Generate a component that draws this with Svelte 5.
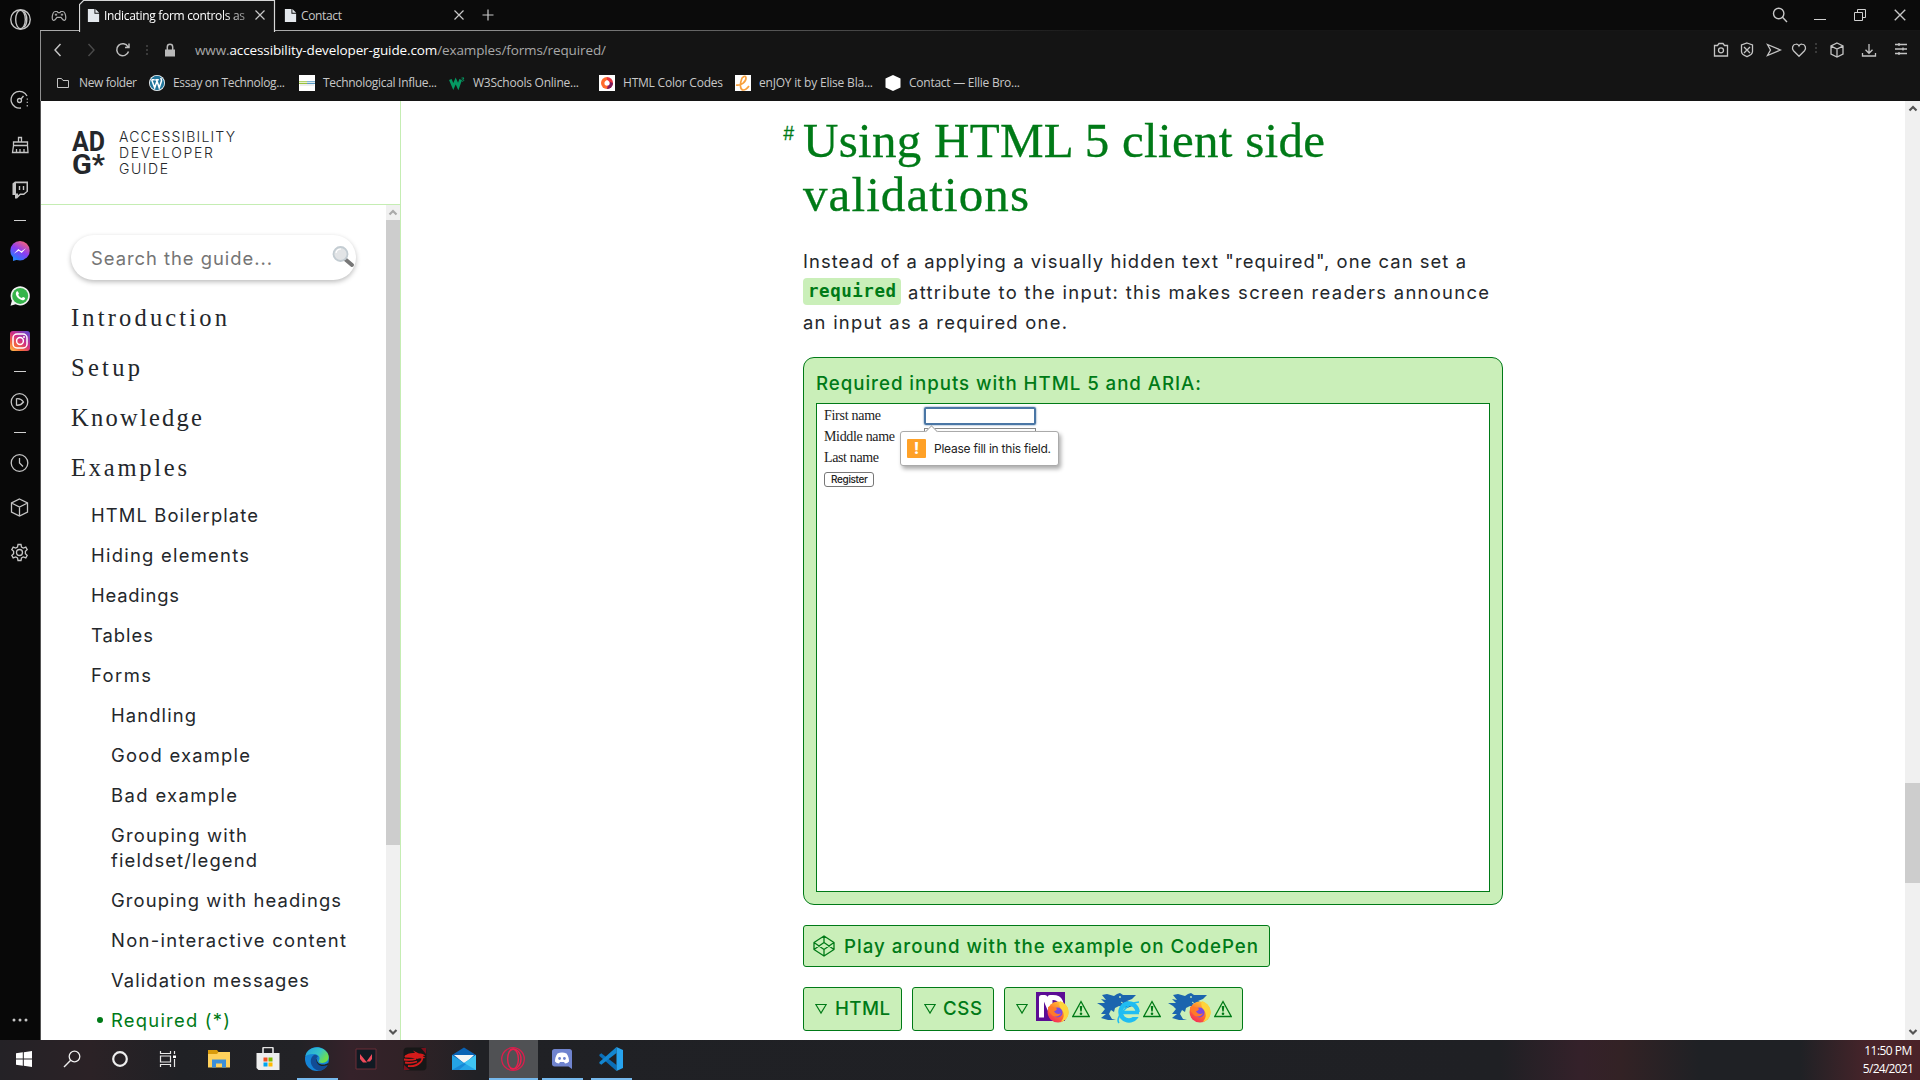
<script>
  // Spreads a line of text to a given width with letter-spacing.
  function fit(node, width) {
    const count = Math.max(node.textContent.trim().length - 1, 1);
    let spacing = 0.01;
    for (let i = 0; i < 3; i++) {
      node.style.letterSpacing = spacing + 'px';
      const used = node.getBoundingClientRect().width - spacing;
      spacing += (width - used) / count;
    }
    node.style.letterSpacing = spacing + 'px';
  }

  const line = 'fill="none" stroke="#c4c4c4" stroke-width="1.3"';
  const firefox = `<circle cx="11" cy="12" r="10.5" fill="url(#ff)"/><path d="M13 1c5 2 9 6 8.600 12-.5 5-4 8-8 9 4-4 4-9 1-12-2-3-3-5-1.600-9z" fill="#ffd43a"/><circle cx="10.500" cy="12.500" r="5" fill="#7a4be0"/><path d="M1 7c3-2 5 0 8 1 2 1 0 3-2 3 1 3 5 4 7 2-1 4-7 5-10 1-2-2-3-4-3-7z" fill="#ff7a2a"/>`;
  const shark = `<path d="M5 3 10 2 17 4 20 2 23 1 26 3 39 3 35 7 30 9 38 13 30 16 22 14 18 16 17 20 14 18 12 22 15 27 19 28 11 28 4 26 9 22 4 22 8 17 5 14 0 11 8 11 4 7 9 8z" fill="#1b65ae"/><path d="M24 10l3 2 3-2 2 3" fill="none" stroke="#caefb9" stroke-width="1"/><circle cx="23" cy="5" r=".9" fill="#caefb9"/>`;

  const icons = {
    opera: [20, `<circle cx="10" cy="10" r="9.300" ${line}/><ellipse cx="10" cy="10" rx="4.600" ry="8.800" ${line}/><path d="M13 2.500c4 3 4 12 0 15" ${line}/>`],
    pad: [16, `<path d="M4 3.500h2.200l.8 1.200h2l.8-1.200H12c1.700 0 2.800 3.500 2.800 6.500s-2.300 3-3.800.7L10 9.300H6L5 10.700c-1.500 2.300-3.800 2.300-3.800-.7S2.300 3.500 4 3.500z" fill="none" stroke="#aaa" stroke-width="1.200"/><path d="M3.800 6.700h2.400M5 5.500v2.400M9.800 6.700h2.400M11 5.500v2.400" stroke="#aaa"/>`],
    doc: [16, `<path d="M2 1h7v5h5v9H2z" fill="#e4e8ec"/><path d="M10 1l4 4h-4z" fill="#e4e8ec"/>`],
    x: [12, `<path d="M1.500 1.500l9 9m0-9l-9 9" stroke="#c8c8c8" stroke-width="1.200"/>`],
    plus: [12, `<path d="M6 .5v11M.5 6h11" stroke="#c8c8c8" stroke-width="1.200"/>`],
    back: [14, `<path d="M9.500 1L4 7l5.500 6" fill="none" stroke="#c8c8c8" stroke-width="1.400"/>`],
    forward: [14, `<path d="M4.500 1L10 7l-5.500 6" fill="none" stroke="#4b4b4b" stroke-width="1.400"/>`],
    reload: [16, `<path d="M13.500 9.500A6 6 0 1 1 13 4.800M14 1.500V5.500H10" fill="none" stroke="#bdbdbd" stroke-width="1.500"/>`],
    dots: [12, `<path d="M5 1h2v2H5zM5 5h2v2H5zM5 9h2v2H5z" fill="#3a3a3a"/>`],
    lock: [14, `<path d="M2 6.500h10v7H2z" fill="#b9b9b9"/><path d="M4.300 7V4a2.700 2.700 0 0 1 5.400 0v3" fill="none" stroke="#b9b9b9" stroke-width="1.500"/>`],
    folder: [14, `<path d="M1.500 2.500h4l1.500 2h5.500v7h-11z" fill="none" stroke="#c4c4c4"/>`],
    wordpress: [16, `<circle cx="8" cy="8" r="8" fill="#f4f8fa"/><circle cx="8" cy="8" r="7.200" fill="#21759b"/><path d="M2.500 4.800h3.200M2.700 5l3 7.800L8 6l2.200 6.800 2.200-6.500c.5-1.500-.5-2-.5-3.200M6.300 4.800h3.500M6.800 5L8 6" fill="none" stroke="#fff" stroke-width="1.500"/>`],
    tech: [16, `<path d="M0 0h16v16H0z" fill="#fff"/><path d="M0 6.200h8v1H0zM0 8h8v1H0z" fill="#99c23c"/><path d="M8 6.200h8v1H8zM8 8h8v1H8z" fill="#5a9bc4"/><path d="M1 10h14" stroke="#ccc" stroke-width=".7"/>`],
    w3: [16, `<path d="M1.300 4.500L4.300 11.500 6.700 6 9.200 11.500 11.700 4.500" fill="none" stroke="#059862" stroke-width="2.800"/><path d="M12.500 3h2.500l-1.300 1.500c1.500 0 1.500 2-.9 1.700" fill="none" stroke="#059862"/>`],
    colors: [16, `<path d="M0 0h16v16H0z" fill="#fff"/><path d="M8 2a6 6 0 1 0 0 12z" fill="#ff6a2b"/><path d="M8 2a6 6 0 1 1 0 12z" fill="#e8343f"/><path d="M8 14a6 6 0 0 0 6-6l-3-1z" fill="#7a1d5c"/><path d="M8 5c2 1 3 2 2.600 4S6 11.500 5.500 9 6.500 6 8 5z" fill="#fff"/>`],
    enjoy: [16, `<path d="M0 0h16v16H0z" fill="#fff"/><path d="M1 10c5 1 10-3 10-7 0-3-4-2-5 3-1 4-1 9 2.500 9 2.500 0 4-2 5.500-4" fill="none" stroke="#f8a13e" stroke-width="1.700"/>`],
    hex: [16, `<path d="M8 0l7.500 3.500v9L8 16 .5 12.500v-9z" fill="#fff"/>`],
    search: [16, `<circle cx="6.700" cy="6.500" r="5.200" fill="none" stroke="#c8c8c8" stroke-width="1.400"/><path d="M10.500 10.300L15 15" stroke="#c8c8c8" stroke-width="1.400"/>`],
    min: [12, `<path d="M0 10.500h12" stroke="#d0d0d0"/>`],
    restore: [12, `<path d="M.5 3.500h8v8h-8zM3.500 3V.5h8v8H9" fill="none" stroke="#d0d0d0"/>`],
    camera: [16, `<path d="M1.500 3.500h3l1.500-2h4l1.500 2h3v10.500h-13z" ${line}/><circle cx="8" cy="8.300" r="2.500" ${line}/>`],
    shield: [16, `<path d="M8 1l5.500 2v6.500c0 2.500-2.500 4-5.500 5.200-3-1.200-5.500-2.700-5.500-5.200V3z" ${line}/><path d="M5 5l6 6m0-6l-6 6" ${line}/>`],
    send: [16, `<path d="M1.500 2.500L14.500 8l-13 5.500L4.500 8z" ${line}/>`],
    heart: [16, `<path d="M8 14.300L2.500 8.800C.5 6.500 1.500 2.500 4.800 2.200 6.500 2 7.500 3 8 4c.5-1 1.500-2 3.200-1.800 3.300.3 4.300 4.300 2.300 6.600z" ${line}/>`],
    cube: [16, `<path d="M8 1l6 3v8l-6 3-6-3V4zM2.200 4.200L8 7l5.800-2.800M8 7v8" ${line}/>`],
    download: [16, `<path d="M8 2v9M4.500 7.800L8 11.300l3.500-3.500M1.500 11v3h13v-3" ${line}/>`],
    sliders: [14, `<path d="M1 2.500h12M1 7h12M1 11.500h12M5 1v3M9 5.500v3M5 10v3" ${line}/>`],
    speed: [20, `<path d="M11 18A8.400 8.400 0 1 1 17 6" ${line}/><path d="M17.300 8.500v8" stroke="#aaa" stroke-width="1.300" stroke-dasharray="1.300 2"/><circle cx="9.500" cy="10.500" r="2" ${line}/><path d="M11 9l2.500-3" ${line}/>`],
    brush: [20, `<path d="M8.500 7V2.500h3V7M3.500 7h14v3.500h-14zM3.500 10.500l-1 7h15.500l-.5-7M6.500 17.500V14M10 17.500V14M14 17.500V14" ${line}/>`],
    twitch: [20, `<path d="M2.500 3.500L5 1.500h13v10L14 15h-3.500L7 18.500H5V15H2.500z" fill="#c4c4c4"/><path d="M6 3.200h10.500v8l-3 2.300H10l-2 1.800v-1.800H6z" fill="#0a0a0a"/><path d="M9.500 6v4M13.500 6v4" stroke="#c4c4c4" stroke-width="1.400"/>`],
    messenger: [20, `<circle cx="10" cy="9.700" r="9.700" fill="url(#ms)"/><path d="M3 15v5l5-1.500z" fill="#2d83fb"/><path d="M3.800 12.800l4.500-4.900 3 2.400L16 7.200l-4.300 4.900-3-2.300z" fill="#fff"/>`],
    whatsapp: [20, `<path d="M.5 19.700l1.400-5A9.600 9.600 0 1 1 5.600 18.300z" fill="#f2f2f2"/><circle cx="10.200" cy="9.900" r="8" fill="#35b44a"/><path d="M7 5.300c1-.8 1.600 1.500 1.900 2 .2.600-.8 1.200-.6 1.600.8 1.500 1.800 2.500 3.400 3.100.4.100.9-1.200 1.500-1 .6.200 2 .9 2 1.300-.1 1.500-1.700 2.300-3 2-3.300-.7-5.800-3.400-6.300-5.700-.2-1.500.3-2.600 1.100-3.300z" fill="#fff"/>`],
    instagram: [20, `<rect width="20" height="20" rx="3" fill="url(#ig)"/><rect x="3" y="3" width="14" height="14" rx="4" fill="none" stroke="#fff" stroke-width="1.500"/><circle cx="10" cy="10" r="3.400" fill="none" stroke="#fff" stroke-width="1.500"/><circle cx="14" cy="6" r="1" fill="#fff"/>`],
    player: [20, `<circle cx="9.500" cy="10" r="8.300" ${line}/><path d="M6.500 6.800c3-.5 5.500 1 7 3.200-1.500 2-4 3.500-7 3.200z" ${line}/>`],
    clock: [20, `<circle cx="9.500" cy="10" r="8.300" ${line}/><path d="M9.500 5v5l3.500 3.500" ${line}/>`],
    box: [20, `<path d="M9.500 1l8 4v9l-8 4-8-4V5zM1.500 5l8 4 8-4M9.500 9v9" ${line}/>`],
    gear: [20, `<circle cx="9.500" cy="9.500" r="3" ${line}/><path d="M8 1.500h3l.5 2.500 1.800 1 2.500-.9 1.400 2.600-1.800 1.700v2.200l1.800 1.700-1.400 2.600-2.500-.9-1.800 1-.5 2.500H8L7.500 15l-1.800-1-2.500.9-1.400-2.600 1.800-1.700V8.400L1.800 6.700l1.400-2.600 2.500.9 1.800-1z" ${line}/>`],
    more: [20, `<circle cx="4" cy="10" r="1.500" fill="#c4c4c4"/><circle cx="10" cy="10" r="1.500" fill="#c4c4c4"/><circle cx="16" cy="10" r="1.500" fill="#c4c4c4"/>`],
    windows: [24, `<path d="M4 6.300l6.800-1v6.200H4zM11.800 5.200L20 4v7.500h-8.200zM4 12.500h6.800v6.200L4 17.700zM11.800 12.500H20V20l-8.200-1.200z" fill="#fff"/>`],
    find: [24, `<circle cx="14.500" cy="9.500" r="5.300" fill="none" stroke="#eee" stroke-width="1.300"/><path d="M10.700 13.300L4 20" stroke="#eee" stroke-width="1.400"/>`],
    cortana: [24, `<circle cx="12" cy="12" r="6.800" fill="none" stroke="#eee" stroke-width="2.200"/>`],
    tasks: [24, `<path d="M4.500 4v2.500h10V4M4.500 20v-2.500h10V20M4.500 9h10v6h-10zM18.500 4v3M18.500 12v8" fill="none" stroke="#e8e8e8" stroke-width="1.200"/><path d="M17 8.500h3v2.500h-3z" fill="#fff"/>`],
    explorer: [24, `<path d="M1 3h9l1.500 2H23v15H1z" fill="#d99b0c"/><path d="M1 7h9l1.500-2H23v15.500H1z" fill="#ffd15c"/><path d="M5 20.500v-8h14v8h-4v-4H9v4z" fill="#3c8fd8"/>`],
    store: [24, `<path d="M7 7V1.500c0-.6.400-1 1-1h8c.6 0 1 .4 1 1V7" fill="none" stroke="#e2e2e2" stroke-width="1.600"/><path d="M.5 6h23v17h-21l-2-2z" fill="#eee"/><path d="M7.500 10.500h4v4h-4z" fill="#f25022"/><path d="M12.500 10.500h4v4h-4z" fill="#7fba00"/><path d="M7.500 15.500h4v4h-4z" fill="#00a4ef"/><path d="M12.500 15.500h4v4h-4z" fill="#ffb900"/>`],
    edge: [24, `<circle cx="12" cy="12" r="12" fill="#1583d5"/><path d="M.4 9C2-1 18-3 23 7c2 5-1 9-6 9-3 0-4-1-3-2.500C16 9 12 7 8 7 4 7 1.500 8.500.4 9z" fill="url(#ed)"/><path d="M9 8c-6 4-3 14 5 15.800 4-.3 7-2.300 9-5.800-4 2-10 1.500-11.500-3C10.500 12 12 10 13 9.500 12 8 10.500 7.500 9 8z" fill="#124c95"/><path d="M13 10c-2 2-1 6 2 7 3 1 6 .5 8-1v2c-4 2-10 1.500-11.500-3-.6-2 .2-4 1.500-5z" fill="#1f2024"/>`],
    valorant: [24, `<path d="M2 2h20v20H2z" fill="#101a23" stroke="#6b2c37"/><path d="M6 7l7 8.500H9L6 12zM18 7v5l-2 2.500h-3.500z" fill="#ef4a5a"/>`],
    dragon: [24, `<rect x=".5" y=".5" width="23" height="23" rx="4" fill="#171717"/><path d="M18 1h5v6zM1 18v5h6z" fill="#7b101c"/><path d="M1 9.500c3-3 7-4 11-3.500L10 3.500l6 3c3-.5 5 1 6.500 2l-3 .5 3 2-4 .5" fill="#d51b1b"/><path d="M2 9.500c5 0 9 .5 12 1.500l5-1.500c1 3-1 6-4 7.500M1 12.500c4 .5 8 .5 12-.5M2 15.500c4 .8 8 .5 12-1M5 19c5 .5 9-.5 12-3.500" fill="none" stroke="#d51b1b" stroke-width="1.800"/>`],
    mail: [24, `<path d="M0 8l12-7.500L24 8v3L12 16 0 11z" fill="#0a62b4"/><path d="M2 8h20l-9 9z" fill="#f4f4f4"/><path d="M0 8l12 8L24 8v15H0z" fill="#25a4e6"/><path d="M12 16L24 8v15z" fill="#3fc4f2"/><path d="M0 23l12-7 2 1-7 6z" fill="#1889d6"/>`],
    operagx: [24, `<circle cx="12" cy="12" r="11.300" fill="none" stroke="#d91e4c" stroke-width="1.300"/><ellipse cx="12" cy="12" rx="5.400" ry="10" fill="none" stroke="#e8204f" stroke-width="1.400"/><path d="M9 3c7-3 11 3 11 9s-4 12-11 9" fill="none" stroke="#e8204f" stroke-width="1.400"/>`],
    discord: [24, `<path d="M4.500 2h15c1.500 0 2.500 1 2.500 2.500V22l-3.500-2.500H4.500C3 19.500 2 18.500 2 17V4.500C2 3 3 2 4.500 2z" fill="#7084cf"/><path d="M7.500 6.500c3-1.300 6-1.300 9 0C18.500 9 19 12 19 14.500c-1 1.200-2.500 2-4 2l-1-1.500h-4L9 16.500c-1.500 0-3-.8-4-2 0-2.500.5-5.500 2.500-8z" fill="#fff"/><circle cx="9.600" cy="11.500" r="1.400" fill="#7084cf"/><circle cx="14.400" cy="11.500" r="1.400" fill="#7084cf"/>`],
    vscode: [24, `<path d="M.3 7.800l2-1.600L17.500 18v6L.5 9z" fill="#0b6fb8"/><path d="M.3 16.200l2 1.600L17.500 6V0L.5 15z" fill="#1386d0"/><path d="M17.500 0L24 3v18l-6.500 3z" fill="#27a3ee"/>`],
    codepen: [22, `<path d="M11 1l10 6.500v7L11 21 1 14.500v-7zM11 1v6.500M11 14.500V21M1 7.500l10 7 10-7M1 14.500l10-7 10 7" fill="none" stroke="#007a17" stroke-width="1.300" stroke-linejoin="round"/>`],
    down: [12, `<path d="M.8 1.500h10.400L6 10z" fill="none" stroke="#007a17" stroke-width="1.200"/>`],
    warn: [18, `<path d="M9 1.500L17.200 16.500H.8z" fill="none" stroke="#007a17" stroke-width="1.300"/><path d="M7.700 6h2.600l-.6 5.500H8.300z" fill="#007a17"/><circle cx="9" cy="13.700" r="1.300" fill="#007a17"/>`],
    up: [10, `<path d="M1.500 6.500L5 3l3.500 3.500" fill="none" stroke="#555" stroke-width="2.200"/>`],
    upLight: [10, `<path d="M1.500 6.500L5 3l3.500 3.500" fill="none" stroke="#aaa" stroke-width="2.200"/>`],
    downArrow: [10, `<path d="M1.500 3L5 6.500 8.500 3" fill="none" stroke="#555" stroke-width="2.200"/>`],
    glass: [24, `<path d="M14.500 14.500l6.500 5.500" stroke="#777" stroke-width="4" stroke-linecap="round"/><circle cx="9.500" cy="9" r="7" fill="#e2e4e6" stroke="#c3ccd2" stroke-width="1.800"/><path d="M5 8a5 5 0 0 1 5-4" stroke="#fff" stroke-width="1.200" fill="none"/>`]
  };

  const bookmarks = [
    ['folder', 'New folder', 58, 93],
    ['wordpress', 'Essay on Technolog...', 112, 150],
    ['tech', 'Technological Influe...', 114, 150],
    ['w3', 'W3Schools Online...', 106, 150],
    ['colors', 'HTML Color Codes', 100, 136],
    ['enjoy', 'enJOY it by Elise Bla...', 114, 150],
    ['hex', 'Contact — Ellie Bro...', 111, 150]
  ];
  const tools = [['camera', 18], ['shield', 34], ['send', 20], ['heart', 30], ['dots', 4], ['cube', 37], ['download', 27], ['sliders', 38]];
  const rail = ['speed', 'brush', 'twitch', '-', 'messenger', 'whatsapp', 'instagram', '-', 'player', '-', 'clock', 'box', 'gear'];
  const chapters = [['Introduction', 156], ['Setup', 69], ['Knowledge', 131], ['Examples', 116]];
  const topics = [['HTML Boilerplate', 167], ['Hiding elements', 158], ['Headings', 88], ['Tables', 62], ['Forms', 60]];
  const pages = [
    [['Handling', 85]],
    [['Good example', 139]],
    [['Bad example', 126]],
    [['Grouping with', 136], ['fieldset/legend', 146]],
    [['Grouping with headings', 230]],
    [['Non-interactive content', 235]],
    [['Validation messages', 198]]
  ];
  const taskbar = [
    ['windows'], ['find'], ['cortana'], ['tasks'], ['explorer'], ['store'],
    ['edge', 'run'], ['valorant'], ['dragon'], ['mail'], ['operagx', 'active'], ['discord', 'run'], ['vscode', 'run']
  ];
</script>

{#snippet icon(name, size)}
  <svg class="icon" width={size ?? icons[name][0]} height={size ?? icons[name][0]} viewBox="0 0 {icons[name][0]} {icons[name][0]}">{@html icons[name][1]}</svg>
{/snippet}

<svg class="defs" width="0" height="0">
  <defs>
    <linearGradient id="ms" x1=".2" y1="1" x2=".8" y2="0"><stop offset="0" stop-color="#1687ff" /><stop offset=".5" stop-color="#8a3cf5" /><stop offset="1" stop-color="#ff6670" /></linearGradient>
    <linearGradient id="ig" x1="0" y1="1" x2=".8" y2="0"><stop offset="0" stop-color="#ffc94f" /><stop offset=".3" stop-color="#f4683c" /><stop offset=".6" stop-color="#cf2d86" /><stop offset="1" stop-color="#6a45c8" /></linearGradient>
    <linearGradient id="ed" x1="0" y1="0" x2="1" y2=".5"><stop offset="0" stop-color="#1f9fe0" /><stop offset=".6" stop-color="#35c3c8" /><stop offset="1" stop-color="#6fe04a" /></linearGradient>
    <linearGradient id="ff" x1=".8" y1="0" x2=".2" y2="1"><stop offset="0" stop-color="#ffd53a" /><stop offset=".5" stop-color="#ff7a2c" /><stop offset="1" stop-color="#f5245e" /></linearGradient>
  </defs>
</svg>

<div class="screen">
  <div class="window">
    <aside class="rail">
      <div class="brand">{@render icon('opera', 21)}</div>
      {#each rail as item}
        {#if item === '-'}
          <div class="split"><i></i></div>
        {:else}
          <div class="slot">{@render icon(item)}</div>
        {/if}
      {/each}
      <div class="more">{@render icon('more')}</div>
    </aside>

    <div class="browser">
      <div class="tabs">
        <div class="pad">{@render icon('pad')}</div>
        <div class="tab active">
          <svg class="outline" width="197" height="32" viewBox="0 0 197 32"><path d="M.5 32V4.500L4.500.5H195.500V32" fill="#141414" stroke="#d6d6d6" stroke-width="1.200" /></svg>
          {@render icon('doc', 15)}
          <span class="name"><span class="line" use:fit={141}>Indicating form controls as</span></span>
          {@render icon('x')}
        </div>
        <div class="tab">
          {@render icon('doc', 15)}
          <span class="name"><span class="line" use:fit={41}>Contact</span></span>
          {@render icon('x')}
        </div>
        <div class="new">{@render icon('plus')}</div>
        <div class="controls">
          <div>{@render icon('search')}</div>
          <div>{@render icon('min')}</div>
          <div>{@render icon('restore')}</div>
          <div>{@render icon('x', 14)}</div>
        </div>
      </div>

      <div class="address">
        <div class="go">{@render icon('back')}</div>
        <div class="go">{@render icon('forward')}</div>
        <div class="go">{@render icon('reload')}</div>
        <div class="go short">{@render icon('dots')}</div>
        <div class="go">{@render icon('lock')}</div>
        <div class="url"><span class="line" use:fit={411}>www.<b>accessibility-developer-guide.com</b>/examples/forms/required/</span></div>
        <div class="tools">
          {#each tools as [name, width]}
            <div class="tool" style="width: {width}px">{@render icon(name)}</div>
          {/each}
        </div>
      </div>

      <div class="bookmarks">
        {#each bookmarks as [name, label, width, span]}
          <div class="bookmark" style="width: {span}px">
            {@render icon(name)}
            <span class="line" use:fit={width}>{label}</span>
          </div>
        {/each}
      </div>

      <div class="page">
        <nav class="sidebar">
          <header>
            <svg class="logo" width="34" height="54" viewBox="0 0 34 54">
              <text x="0" y="22" textLength="33" lengthAdjust="spacingAndGlyphs">AD</text>
              <text x="0" y="45.300" textLength="33" lengthAdjust="spacingAndGlyphs">G*</text>
            </svg>
            <div class="title">
              <span class="line" use:fit={116}>ACCESSIBILITY</span>
              <span class="line" use:fit={94}>DEVELOPER</span>
              <span class="line" use:fit={49}>GUIDE</span>
            </div>
          </header>
          <div class="scroll">
            <div class="menu">
              <div class="field"><span class="line" use:fit={181}>Search the guide...</span>{@render icon('glass')}</div>
              {#each chapters as [label, width]}
                <div class="chapter"><span class="line" use:fit={width}>{label}</span></div>
              {/each}
              <div class="topics">
                {#each topics as [label, width]}
                  <div class="entry"><span class="line" use:fit={width}>{label}</span></div>
                {/each}
                <div class="pages">
                  {#each pages as rows}
                    <div class="entry">
                      {#each rows as [label, width]}<span class="line" use:fit={width}>{label}</span>{/each}
                    </div>
                  {/each}
                  <div class="entry current"><i></i><span class="line" use:fit={119}>Required (*)</span></div>
                </div>
              </div>
            </div>
            <div class="bar">
              {@render icon('upLight')}
              <div class="track"><div class="thumb"></div></div>
              {@render icon('downArrow')}
            </div>
          </div>
        </nav>

        <main>
          <article>
            <h2>
              <span class="anchor">#</span>
              <span class="line" use:fit={522}>Using HTML 5 client side</span>
              <span class="line" use:fit={226}>validations</span>
            </h2>
            <div class="para">
              <span class="line" use:fit={663}>Instead of a applying a visually hidden text "required", one can set a</span>
              <div class="mixed"><code><span class="line" use:fit={88}>required</span></code><span class="line" use:fit={581}>attribute to the input: this makes screen readers announce</span></div>
              <span class="line" use:fit={264}>an input as a required one.</span>
            </div>

            <section class="panel">
              <div class="caption"><span class="line" use:fit={385}>Required inputs with HTML 5 and ARIA:</span></div>
              <div class="frame">
                <div class="row"><span class="line" use:fit={57}>First name</span><i class="input focus"></i></div>
                <div class="row"><span class="line" use:fit={71}>Middle name</span><i class="input"></i></div>
                <div class="row"><span class="line" use:fit={55}>Last name</span></div>
                <div class="register"><span class="line" use:fit={37}>Register</span></div>
                <div class="hint"><i class="tip"></i><b>!</b><span class="line" use:fit={117}>Please fill in this field.</span></div>
              </div>
            </section>

            <div class="button pen">{@render icon('codepen')}<span class="line" use:fit={414}>Play around with the example on CodePen</span></div>

            <div class="buttons">
              <div class="button html">{@render icon('down')}<span class="line" use:fit={55}>HTML</span></div>
              <div class="button css">{@render icon('down')}<span class="line" use:fit={39}>CSS</span></div>
              <div class="button results">
                {@render icon('down')}
                <svg class="combo" width="34" height="33" viewBox="0 0 34 33">
                  <path d="M0 0h29v29H0z" fill="#5b0d94" />
                  <path d="M5.500 25.500V5.500h3.500l5 12V5.500h3c8 0 9 6 8 14" fill="none" stroke="#fff" stroke-width="5" stroke-linejoin="round" />
                  <g transform="translate(11 8)">{@html firefox}</g>
                </svg>
                {@render icon('warn')}
                <svg class="combo gap" width="44" height="33" viewBox="0 0 44 33">
                  {@html shark}
                  <circle cx="32" cy="20" r="8.500" fill="none" stroke="#20bdf2" stroke-width="4.500" />
                  <path d="M32 20h13v5H32z" fill="#caefb9" />
                  <path d="M25 20.500h17" stroke="#20bdf2" stroke-width="3.500" />
                  <path d="M22 31c-4-5 8-20 20-21" fill="none" stroke="#20bdf2" stroke-width="1.600" />
                </svg>
                {@render icon('warn')}
                <svg class="combo gap" width="44" height="33" viewBox="0 0 44 33">
                  {@html shark}
                  <g transform="translate(21 8)">{@html firefox}</g>
                </svg>
                {@render icon('warn')}
              </div>
            </div>
          </article>
        </main>

        <div class="bar outer">
          {@render icon('up')}
          <div class="track"><div class="thumb"></div></div>
          {@render icon('downArrow')}
        </div>
      </div>
    </div>
  </div>

  <footer>
    {#each taskbar as [name, state]}
      <div class="app {state ?? ''}">{@render icon(name)}</div>
    {/each}
    <div class="time">
      <span class="line" use:fit={48}>11:50 PM</span>
      <span class="line" use:fit={51}>5/24/2021</span>
    </div>
  </footer>
</div>

<style>
  :global(body) { margin: 0; overflow: hidden; }
  .screen { width: 1920px; height: 1080px; display: flex; flex-direction: column; overflow: hidden; font-family: 'Open Sans', 'Noto Sans', sans-serif; font-size: 12px; color: #c8c8c8; background: #0a0a0a; }
  .screen * { box-sizing: border-box; }
  .defs { position: absolute; }
  .icon { display: block; flex: none; }
  .line { display: block; width: max-content; white-space: pre; }
  .window { display: flex; height: 1040px; }

  .rail { width: 40px; display: flex; flex-direction: column; align-items: center; background: #080808; }
  .brand { height: 77px; padding-top: 9px; }
  .slot { height: 45.250px; display: flex; align-items: center; }
  .split { height: 15.500px; display: flex; align-items: center; }
  .split i { width: 12px; height: 1px; background: #d0d0d0; }
  .more { margin-top: auto; height: 30px; }

  .browser { flex: 1; display: flex; flex-direction: column; min-width: 0; }
  .tabs { height: 31px; display: flex; padding-left: 1px; background: linear-gradient(90deg, #aaa 0, #aaa 300px, #161616 1060px) bottom / 100% 1px no-repeat, #0b0b0b; }
  .pad { width: 38px; padding: 8px 0 0 10px; }
  .tab { position: relative; width: 198px; display: flex; align-items: center; padding: 0 9px 1px 7px; }
  .tab.active { width: 197px; padding-right: 10px; }
  .tab.active { color: #fff; }
  .tab > :global(.icon) { position: relative; }
  .outline { position: absolute; left: 0; top: 0; }
  .name { position: relative; flex: 1; padding: 1px 0 0 3px; line-height: 31px; }
  .active .name { -webkit-mask-image: linear-gradient(90deg, #000 122px, #0007 145px); mask-image: linear-gradient(90deg, #000 122px, #0007 145px); }
  .new { padding: 9px 0 0 8px; }
  .controls { margin-left: auto; display: flex; }
  .controls div { width: 40px; height: 29px; display: flex; align-items: center; justify-content: center; }
  .address { height: 38px; display: flex; align-items: center; background: #141414; border-left: 1px solid #8f8f8f; color: #a8a8a8; font-size: 13.500px; }
  .go { width: 33px; display: flex; justify-content: center; }
  .go:nth-child(3) { width: 32px; }
  .go.short { width: 16px; }
  .go:nth-child(5) { width: 40px; padding-right: 11px; }
  .url b { font-weight: 400; color: #fff; }
  .tools { margin-left: auto; display: flex; }
  .tool { display: flex; justify-content: center; }
  .bookmarks { height: 32px; display: flex; align-items: center; padding: 0 0 5px 15px; background: #141414; border-left: 1px solid #8f8f8f; }
  .bookmark { display: flex; align-items: center; gap: 8px; }
  .bookmark:first-child { gap: 9px; }

  .page { height: 939px; display: flex; background: #fff; border-left: 1px solid #555; color: #24272b; font-family: Inter, 'Open Sans', sans-serif; }
  .sidebar { width: 360px; display: flex; flex-direction: column; border-right: 1px solid #c5edb3; }
  header { height: 104px; display: flex; padding: 28px 0 0 31px; border-bottom: 1px solid #c5edb3; font-size: 14px; font-weight: 350; line-height: 16px; }
  .logo { margin-right: 13px; overflow: visible; }
  .logo text { font: 700 27.200px Roboto, sans-serif; fill: #24272b; }
  .scroll { height: 835px; display: flex; overflow: hidden; }
  .menu { flex: 1; padding: 30px 0 0 30px; font-size: 18.400px; }
  .field { width: 285px; height: 45px; display: flex; align-items: center; justify-content: space-between; padding: 0 1px 0 20px; margin-bottom: 13px; border-radius: 23px; box-shadow: 0 2px 5px #0004; color: #757575; font-weight: 400; }
  .field :global(.icon) { margin-top: -2px; }
  .chapter { height: 50px; font: 400 24.500px/50px 'Liberation Serif', serif; }
  .topics { padding: 2px 0 0 20px; }
  .pages { padding-left: 20px; }
  .entry { position: relative; padding: 7.500px 0; line-height: 25px; font-weight: 375; }
  .current { color: #007a17; }
  .current i { position: absolute; left: -14px; top: 17px; width: 6px; height: 6px; border-radius: 50%; background: #007a17; }

  .bar { width: 14px; display: flex; flex-direction: column; align-items: center; padding: 3px 0; background: #f0f0f0; }
  .track { flex: 1; width: 100%; margin: 2px 0; }
  .thumb { height: 625px; background: #cdcdcd; }
  .outer { width: 15px; }
  .outer .track { padding-top: 667px; }
  .outer .thumb { height: 100px; }

  main { flex: 1; padding-left: 402px; overflow: hidden; }
  article { width: 700px; display: flex; flex-direction: column; align-items: flex-start; }
  h2 { position: relative; margin: 13px 0 24px; font: 400 49px/54px 'Liberation Serif', serif; color: #007a17; -webkit-text-stroke: 0.300px #007a17; }
  .anchor { position: absolute; left: -20px; top: 7px; font: 300 18px/26px Inter, sans-serif; }
  .para { margin-bottom: 19px; font-size: 18.400px; line-height: 30.500px; font-weight: 375; }
  .mixed { display: flex; align-items: center; gap: 7px; }
  code { width: 98px; height: 27px; padding-left: 5px; border-radius: 4px; background: #caefb9; color: #007a17; font: 700 17.500px/26px 'DejaVu Sans Mono', monospace; }
  .panel { width: 700px; height: 548px; margin-bottom: 20px; padding: 13px 12px 12px; border: 1px solid #007a17; border-radius: 11px; background: #caefb9; }
  .caption { height: 32px; color: #007a17; font-size: 18.700px; font-weight: 500; line-height: 26px; }
  .frame { position: relative; height: 489px; padding: 2px 0 0 7px; background: #fff; border: 1px solid #007a17; color: #222; font: 14px 'Liberation Serif', serif; }
  .row { height: 21px; display: flex; align-items: center; line-height: 20px; padding-bottom: 1px; }
  .row .line { padding-top: 1px; }
  .row .input { margin-left: auto; margin-right: 453px; width: 112px; height: 18px; border: 1px solid #888; }
  .row .focus { border: 2px solid #4a76a5; border-radius: 2px; box-shadow: 0 0 2px #4a76a5; }
  .register { width: 50px; height: 15px; margin-top: 3px; padding-left: 6px; border: 1px solid #777; border-radius: 3px; font: 500 10px/13px Inter, sans-serif; }
  .hint { position: absolute; left: 83px; top: 27px; width: 159px; height: 35px; display: flex; align-items: center; padding-left: 6px; background: #fff; border: 1px solid #aaa; border-radius: 3px; box-shadow: 2px 3px 4px #0005; font: 12px Inter, sans-serif; }
  .hint b { width: 19px; height: 19px; margin-right: 8px; border-radius: 1px; background: #ffa127; color: #fff; font: 900 16px/19px Roboto, sans-serif; text-align: center; }
  .tip { position: absolute; left: 26px; top: -5px; width: 9px; height: 9px; background: #fff; border: solid #aaa; border-width: 1px 0 0 1px; transform: rotate(45deg); }

  .button { height: 44px; display: flex; align-items: center; border: 1px solid #007a17; border-radius: 3px; background: #caefb9; color: #007a17; font-size: 18.700px; font-weight: 500; }
  .pen { width: 467px; height: 42px; margin-bottom: 20px; padding-left: 9px; gap: 9px; }
  .pen .line { padding-top: 1px; }
  .buttons { display: flex; gap: 10px; }
  .html { width: 99px; padding-left: 11px; gap: 8px; }
  .css { width: 82px; padding-left: 11px; gap: 7px; }
  .results { width: 239px; padding-left: 11px; }
  .combo { margin-left: 8px; flex: none; }
  .results .combo + :global(.icon) { margin-left: 2px; }
  .combo.gap { margin-left: 7px; }

  footer { height: 40px; display: flex; background: linear-gradient(90deg, #242226 0, #2b2226 90px, #202125 180px, #222226 300px, #35222a 350px, #302226 410px, #202125 480px, #1f2024 1500px, #34212a 1580px, #332225 1620px, #1f2125 1700px, #1f2125 1800px, #48242a 1870px, #4a2228 1920px); }
  .app { position: relative; width: 48px; display: flex; align-items: center; justify-content: center; border-bottom: 2px solid transparent; }
  .app:nth-child(n + 5) { width: 49px; }
  .app:nth-child(5) { margin-left: 2.500px; }
  .app.active { background: #505154; border-color: #76b9ed; }
  .app.run::after { content: ''; position: absolute; left: 4px; right: 4px; bottom: -2px; height: 2px; background: #76b9ed; }
  .time { margin-left: auto; width: 60px; display: flex; flex-direction: column; align-items: center; padding: 2px 4px 0 0; line-height: 18px; color: #fff; }
</style>
